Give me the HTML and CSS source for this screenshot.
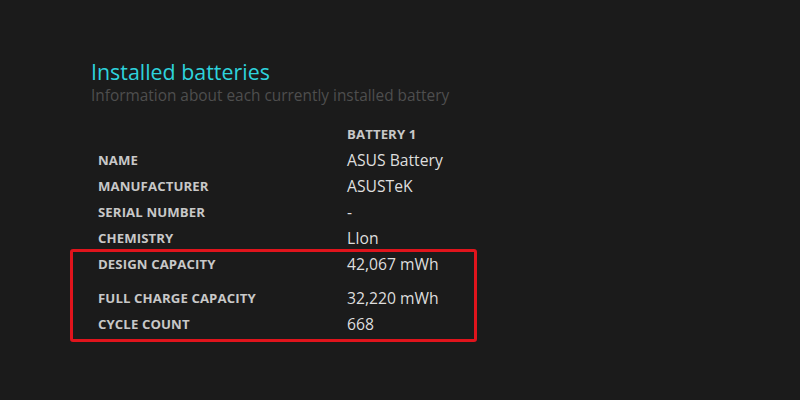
FILE: index.html
```html
<!DOCTYPE html>
<html>
<head>
<meta charset="utf-8">
<link rel="stylesheet" href="styles.css">
</head>
<body>
<div class="page">
  <h1 class="title">Installed batteries</h1>
  <p class="subtitle">Information about each currently installed battery</p>
  <div class="table">
    <div class="row head"><span class="label"></span><span class="col-head">BATTERY 1</span></div>
    <div class="row"><span class="label">NAME</span><span class="value">ASUS Battery</span></div>
    <div class="row"><span class="label">MANUFACTURER</span><span class="value">ASUSTeK</span></div>
    <div class="row"><span class="label">SERIAL NUMBER</span><span class="value">-</span></div>
    <div class="row"><span class="label">CHEMISTRY</span><span class="value">LIon</span></div>
    <div class="highlight-group">
      <div class="row"><span class="label">DESIGN CAPACITY</span><span class="value">42,067 mWh</span></div>
      <div class="row gap"><span class="label">FULL CHARGE CAPACITY</span><span class="value">32,220 mWh</span></div>
      <div class="row"><span class="label">CYCLE COUNT</span><span class="value">668</span></div>
      <div class="highlight"></div>
    </div>
  </div>
</div>
</body>
</html>
```
FILE: styles.css
```css
html, body {
  margin: 0;
  padding: 0;
  background: #1b1b1b;
  width: 800px;
  height: 400px;
  overflow: hidden;
}
.page {
  padding: 57px 0 0 91px;
  font-family: "Open Sans", "Noto Sans", sans-serif;
}
.title {
  margin: 0;
  font-size: 21.4px;
  font-weight: 400;
  color: #2ed3dd;
  line-height: 29px;
}
.subtitle {
  margin: 0;
  font-size: 15.4px;
  color: #4e4e4e;
  line-height: 20px;
}
.table {
  margin-top: 15px;
  padding-left: 7px;
}
.row {
  display: flex;
  align-items: center;
  height: 26px;
}
.row.gap {
  margin-top: 8px;
}
.label {
  width: 249px;
  flex: none;
  font-size: 13.2px;
  font-weight: 700;
  color: #c8c8c8;
  letter-spacing: 0.1px;
}
.col-head {
  font-size: 13.2px;
  font-weight: 700;
  color: #c8c8c8;
  letter-spacing: 0.1px;
}
.value {
  font-size: 15.7px;
  color: #dedede;
}
.highlight-group {
  position: relative;
}
.highlight {
  position: absolute;
  box-sizing: border-box;
  left: -28px;
  top: -2px;
  width: 407px;
  height: 93px;
  border: 3px solid #e0141c;
  border-radius: 3px;
}
```
